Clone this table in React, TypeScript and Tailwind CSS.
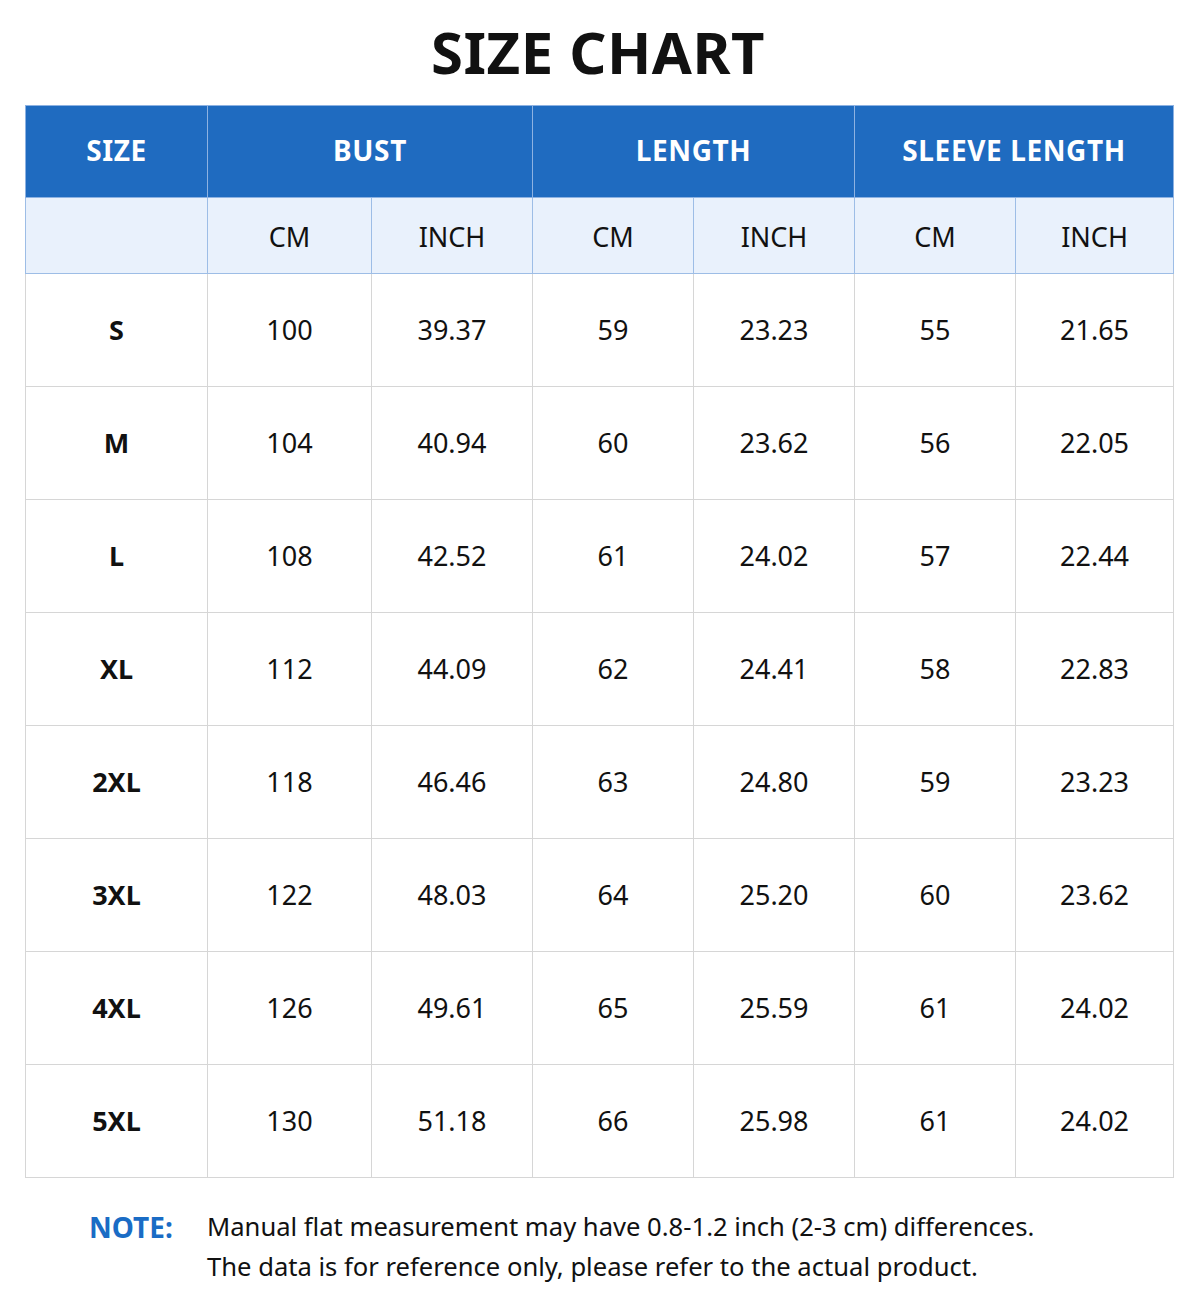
import React from "react";

const rows = [
  ["S", "100", "39.37", "59", "23.23", "55", "21.65"],
  ["M", "104", "40.94", "60", "23.62", "56", "22.05"],
  ["L", "108", "42.52", "61", "24.02", "57", "22.44"],
  ["XL", "112", "44.09", "62", "24.41", "58", "22.83"],
  ["2XL", "118", "46.46", "63", "24.80", "59", "23.23"],
  ["3XL", "122", "48.03", "64", "25.20", "60", "23.62"],
  ["4XL", "126", "49.61", "65", "25.59", "61", "24.02"],
  ["5XL", "130", "51.18", "66", "25.98", "61", "24.02"],
];

export default function App() {
  return (
    <div
      className="w-[1196px] h-[1315px] bg-white text-[#111] overflow-hidden"
      style={{ fontFamily: '"Noto Sans", "Open Sans", sans-serif' }}
    >
      <h1 className="pt-[17px] text-center text-[58px] leading-[70px] font-bold tracking-[0.5px] text-[#111]">
        SIZE CHART
      </h1>
      <div className="px-[25px] pt-[18px]">
        <table className="w-[1148px] table-fixed border-collapse">
          <colgroup>
            <col className="w-[182px]" />
            <col className="w-[164px]" />
            <col className="w-[161px]" />
            <col className="w-[161px]" />
            <col className="w-[161px]" />
            <col className="w-[161px]" />
            <col className="w-[158px]" />
          </colgroup>
          <thead>
            <tr className="h-[92px] bg-[#1f6bc0] text-white text-[28px] font-bold tracking-[0.6px]">
              <th className="border border-[#8db2e2] pb-[3px] font-bold">SIZE</th>
              <th colSpan={2} className="border border-[#8db2e2] pb-[3px] font-bold">BUST</th>
              <th colSpan={2} className="border border-[#8db2e2] pb-[3px] font-bold">LENGTH</th>
              <th colSpan={2} className="border border-[#8db2e2] pb-[3px] font-bold">SLEEVE LENGTH</th>
            </tr>
            <tr className="h-[76px] bg-[#e9f1fc] text-[27px] text-[#111]">
              <th className="border border-[#9dbde6] pt-[3px] font-normal"></th>
              <th className="border border-[#9dbde6] pt-[3px] font-normal">CM</th>
              <th className="border border-[#9dbde6] pt-[3px] font-normal">INCH</th>
              <th className="border border-[#9dbde6] pt-[3px] font-normal">CM</th>
              <th className="border border-[#9dbde6] pt-[3px] font-normal">INCH</th>
              <th className="border border-[#9dbde6] pt-[3px] font-normal">CM</th>
              <th className="border border-[#9dbde6] pt-[3px] font-normal">INCH</th>
            </tr>
          </thead>
          <tbody>
            {rows.map((r) => (
              <tr key={r[0]} className="h-[113px] text-[27px] text-[#111]">
                {r.map((c, i) => (
                  <td
                    key={i}
                    className={
                      i === 0
                        ? "border border-[#d6d6d6] text-center font-bold"
                        : "border border-[#d6d6d6] text-center"
                    }
                  >
                    {c}
                  </td>
                ))}
              </tr>
            ))}
          </tbody>
        </table>
      </div>
      <div className="flex pl-[89px] pt-[29px] text-[25.6px] leading-[40px]">
        <div className="w-[118px] text-[28px] font-bold text-[#1a6cc5]">NOTE:</div>
        <div className="text-[#111]">
          <div>Manual flat measurement may have 0.8-1.2 inch (2-3 cm) differences.</div>
          <div>The data is for reference only, please refer to the actual product.</div>
        </div>
      </div>
    </div>
  );
}
